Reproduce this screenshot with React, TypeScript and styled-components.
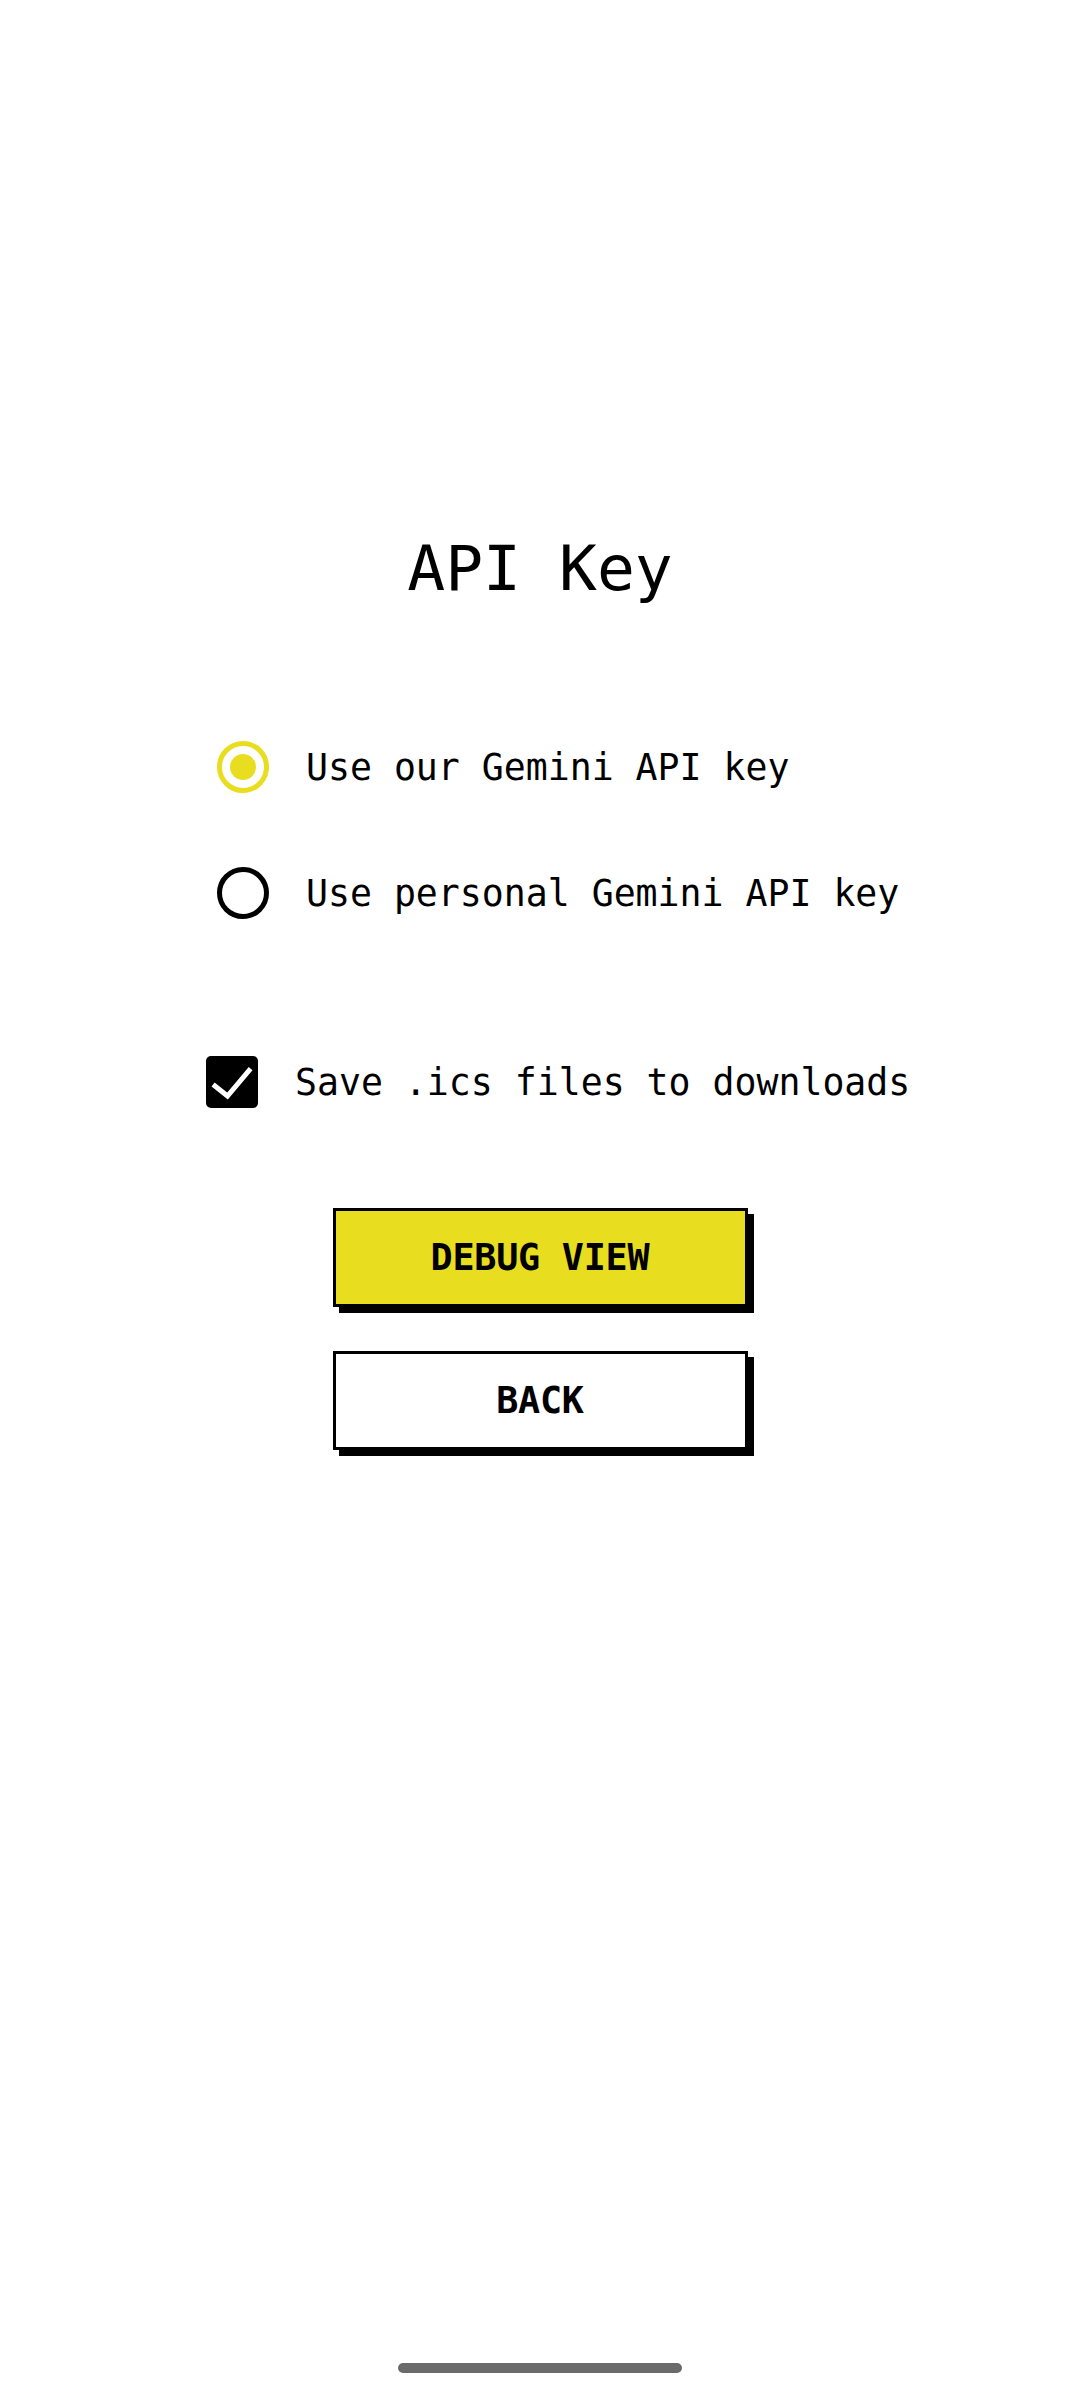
import React, { useState } from "react";
import styled, { createGlobalStyle } from "styled-components";

const GlobalStyle = createGlobalStyle`
  html, body {
    margin: 0;
    padding: 0;
    background: #ffffff;
  }
  body {
    font-family: "DejaVu Sans Mono", "Liberation Mono", monospace;
    color: #000000;
  }
`;

const YELLOW = "#e8dd1f";

const Screen = styled.div`
  width: 1080px;
  min-height: 2400px;
  box-sizing: border-box;
  display: flex;
  flex-direction: column;
  align-items: center;
  padding-top: 532px;
  background: #ffffff;
`;

const Title = styled.h1`
  margin: 0;
  font-family: "DejaVu Sans Mono", monospace;
  font-weight: normal;
  font-size: 63px;
  line-height: 74px;
  color: #000;
`;

const RadioGroup = styled.div`
  align-self: stretch;
  display: flex;
  flex-direction: column;
  gap: 74px;
  margin-top: 135px;
  padding-left: 217px;
`;

const OptionRow = styled.label<{ $indent?: number; $top?: number }>`
  display: flex;
  align-items: center;
  gap: 37px;
  height: 52px;
  margin-left: ${(p) => p.$indent ?? 0}px;
  margin-top: ${(p) => p.$top ?? 0}px;
  cursor: pointer;
`;

const CheckRow = styled(OptionRow)`
  align-self: stretch;
`;

const OptionText = styled.span`
  font-family: "DejaVu Sans Mono", monospace;
  font-size: 36.5px;
  color: #000;
  white-space: nowrap;
`;

const RadioCircle = styled.span<{ $checked: boolean }>`
  width: 52px;
  height: 52px;
  box-sizing: border-box;
  border-radius: 50%;
  border: 5px solid ${(p) => (p.$checked ? YELLOW : "#000")};
  display: flex;
  align-items: center;
  justify-content: center;
  flex-shrink: 0;
`;

const RadioDot = styled.span`
  width: 26px;
  height: 26px;
  border-radius: 50%;
  background: ${YELLOW};
`;

const CheckBox = styled.span`
  width: 52px;
  height: 52px;
  border-radius: 5px;
  background: #000;
  display: flex;
  align-items: center;
  justify-content: center;
  flex-shrink: 0;
`;

const ButtonStack = styled.div`
  display: flex;
  flex-direction: column;
  gap: 44px;
  margin-top: 100px;
`;

const BrutalButton = styled.button<{ $primary?: boolean }>`
  width: 415px;
  height: 99px;
  box-sizing: border-box;
  border: 3px solid #000;
  border-radius: 0;
  background: ${(p) => (p.$primary ? YELLOW : "#ffffff")};
  box-shadow: 6px 6px 0 #000;
  font-family: "DejaVu Sans Mono", monospace;
  font-weight: bold;
  font-size: 36.75px;
  color: #000;
  letter-spacing: -0.25px;
  padding: 0;
  cursor: pointer;
`;

const HomeBar = styled.div`
  margin-top: auto;
  margin-bottom: 27px;
  width: 284px;
  height: 10px;
  border-radius: 5px;
  background: #6b6b6b;
`;

export default function App() {
  const [choice, setChoice] = useState<"ours" | "personal">("ours");
  const [save, setSave] = useState(true);

  return (
    <>
      <GlobalStyle />
      <Screen>
        <Title>API Key</Title>
        <RadioGroup>
          <OptionRow onClick={() => setChoice("ours")}>
            <RadioCircle $checked={choice === "ours"}>
              {choice === "ours" && <RadioDot />}
            </RadioCircle>
            <OptionText>Use our Gemini API key</OptionText>
          </OptionRow>
          <OptionRow onClick={() => setChoice("personal")}>
            <RadioCircle $checked={choice === "personal"}>
              {choice === "personal" && <RadioDot />}
            </RadioCircle>
            <OptionText>Use personal Gemini API key</OptionText>
          </OptionRow>
        </RadioGroup>
        <CheckRow $indent={206} $top={137} onClick={() => setSave(!save)}>
          <CheckBox>
            {save && (
              <svg width="52" height="52" viewBox="0 0 52 52">
                <polyline
                  points="9,30 21.5,40 43,14.5"
                  fill="none"
                  stroke="#ffffff"
                  strokeWidth="5"
                  strokeLinecap="square"
                  strokeLinejoin="miter"
                />
              </svg>
            )}
          </CheckBox>
          <OptionText>Save .ics files to downloads</OptionText>
        </CheckRow>
        <ButtonStack>
          <BrutalButton $primary>DEBUG VIEW</BrutalButton>
          <BrutalButton>BACK</BrutalButton>
        </ButtonStack>
        <HomeBar />
      </Screen>
    </>
  );
}
